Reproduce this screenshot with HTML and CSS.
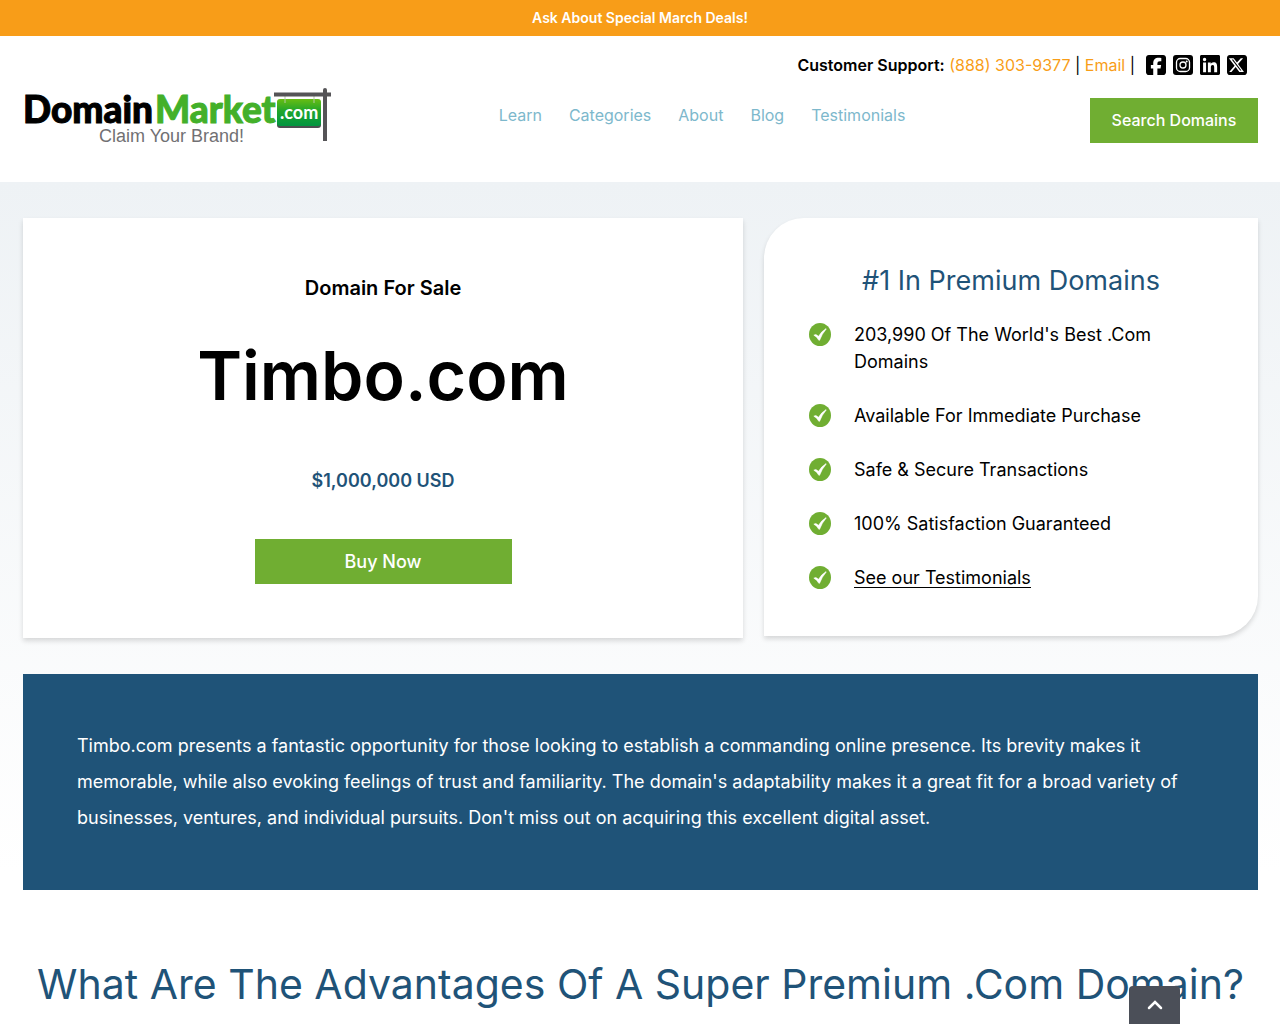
FILE: index.html
```html
<!DOCTYPE html>
<html lang="en">
<head>
<meta charset="utf-8">
<meta name="viewport" content="width=device-width, initial-scale=1">
<title>Timbo.com | DomainMarket.com</title>
<link rel="stylesheet" href="styles.css">
</head>
<body>
<svg class="sprite" aria-hidden="true">
  <symbol id="check" viewBox="0 0 22 23">
    <ellipse cx="11" cy="11.500" rx="11" ry="11.500" fill="#70ae32"/>
    <path d="M4.800 12.200Q6.800 10.200 9.500 13.300Q12.500 8.300 17 5.600L17.300 6Q12.800 11 10.600 17.300H9.800Q7.800 13.500 4.800 12.200Z" fill="#fff" stroke="#fff" stroke-width=".5"/>
  </symbol>
</svg>
<div class="promo">Ask About Special March Deals!</div>
<header class="header">
  <div class="support">
    <span><strong>Customer Support:</strong> <a href="tel:8883039377">(888) 303-9377</a> | <a href="#email">Email</a> |</span>
    <div class="social">
      <a href="#facebook" aria-label="Facebook"><svg viewBox="0 0 448 448"><path d="M64 0C29 0 0 29 0 64v320c0 35 29 64 64 64h98V301h-53v-77h53v-34c0-87 39-127 125-127 16 0 44 3 56 6v71c-6-1-17-1-30-1-42 0-58 16-58 57v28h84l-14 77h-70v147h129c35 0 64-29 64-64V64c0-35-29-64-64-64H64z"/></svg></a>
      <a href="#instagram" aria-label="Instagram"><svg viewBox="0 0 20 20"><rect width="20" height="20" rx="3"/><g fill="none" stroke="#fff" stroke-width="1.300"><rect x="3.500" y="3.500" width="13" height="13" rx="3.800"/><circle cx="10" cy="10" r="3"/></g><circle cx="13.700" cy="6.400" r="1" fill="#fff"/></svg></a>
      <a href="#linkedin" aria-label="LinkedIn"><svg viewBox="0 0 448 448"><path d="M416 0H32C14 0 0 15 0 32v384c0 17 14 32 32 32h384c18 0 32-15 32-32V32c0-17-14-32-32-32zM135 384H69V170h67v214zM102 141a38 38 0 1 1 0-77 38 38 0 0 1 0 77zm282 243h-66V280c0-25-1-57-35-57s-40 27-40 55v106h-66V170h64v29h1c9-17 30-35 62-35 67 0 80 45 80 102v118z"/></svg></a>
      <a href="#x" aria-label="X"><svg viewBox="0 0 448 448"><path d="M64 0C29 0 0 29 0 64v320c0 35 29 64 64 64h320c35 0 64-29 64-64V64c0-35-29-64-64-64H64zm297 72L247 202l133 176H276l-82-107-94 107H49l121-139L42 72h107l74 98 86-98h52zM323 348 137 101h-31l189 247h28z"/></svg></a>
    </div>
  </div>
  <div class="bar">
    <a class="logo" href="#home" aria-label="DomainMarket.com, Claim Your Brand!">
      <svg viewBox="0 0 308 57" width="308" height="57">
        <defs><linearGradient id="sign" x2="0" y2="1"><stop stop-color="#68bd12"/><stop offset=".45" stop-color="#1fa52c"/><stop offset="1" stop-color="#009540"/></linearGradient></defs>
        <text class="logo-name" x="-1" y="36">Domain<tspan class="logo-green" x="131">Market</tspan></text>
        <rect x="253" y="14" width="44" height="27" rx="3" fill="#4b5050"/>
        <rect x="253" y="12" width="44" height="27" rx="3" fill="url(#sign)"/>
        <path d="M261 9v7M290 9v7" stroke="#b5c9a5"/>
        <path d="M250 7.500h57" stroke="#555457" stroke-width="4"/>
        <path d="M301 3v51" stroke="#555457" stroke-width="4"/>
        <circle cx="301" cy="3" r="2" fill="#555457"/>
        <text class="logo-com" x="256" y="32">.com</text>
        <text class="logo-tag" x="75" y="55">Claim Your Brand!</text>
      </svg>
    </a>
    <nav class="nav">
      <a href="#learn">Learn</a><a href="#categories">Categories</a><a href="#about">About</a><a href="#blog">Blog</a><a href="#testimonials">Testimonials</a>
    </nav>
    <button class="button search" type="button">Search Domains</button>
  </div>
</header>
<main class="main">
  <div class="cards">
    <section class="card sale">
      <h2>Domain For Sale</h2>
      <h1>Timbo.com</h1>
      <p class="price">$1,000,000 USD</p>
      <button class="button buy" type="button">Buy Now</button>
    </section>
    <section class="card premium">
      <h2>#1 In Premium Domains</h2>
      <ul>
        <li><svg><use href="#check"/></svg><span>203,990 Of The World's Best .Com Domains</span></li>
        <li><svg><use href="#check"/></svg><span>Available For Immediate Purchase</span></li>
        <li><svg><use href="#check"/></svg><span>Safe &amp; Secure Transactions</span></li>
        <li><svg><use href="#check"/></svg><span>100% Satisfaction Guaranteed</span></li>
        <li><svg><use href="#check"/></svg><a href="#testimonials">See our Testimonials</a></li>
      </ul>
    </section>
  </div>
  <p class="about">Timbo.com presents a fantastic opportunity for those looking to establish a commanding online presence. Its brevity makes it memorable, while also evoking feelings of trust and familiarity. The domain's adaptability makes it a great fit for a broad variety of businesses, ventures, and individual pursuits. Don't miss out on acquiring this excellent digital asset.</p>
  <h2 class="advantages">What Are The Advantages Of A Super Premium .Com Domain?</h2>
</main>
<button class="to-top" type="button" aria-label="Back to top"><svg viewBox="0 0 16 10" width="16" height="10"><path d="M2 8l6-6 6 6" fill="none" stroke="#fff" stroke-width="2.500" stroke-linecap="round"/></svg></button>
</body>
</html>
```
FILE: styles.css
```css
* { box-sizing: border-box; }
body { margin: 0; font: 18px/27px Inter, sans-serif; color: #000; background: #fff; }
h1, h2, p, ul { margin: 0; padding: 0; }
a { color: inherit; text-decoration: none; }
.sprite { display: none; }

.promo { padding: 4px; background: #f89d18; color: #fff; font-size: 14px; line-height: 28px; font-weight: 600; text-align: center; }

.header { padding: 16px 22px 39px 24px; font-size: 16px; }
.support { display: flex; justify-content: flex-end; gap: 11px; padding-right: 11px; line-height: 26px; }
.support strong { font-weight: 600; }
.support span a { color: #f89d18; }
.social { display: flex; align-items: center; gap: 7px; }
.social svg { display: block; width: 20px; height: 20px; }
.bar { display: flex; justify-content: space-between; align-items: flex-start; padding-top: 9px; }
.logo { height: 56px; }
.logo svg { display: block; overflow: visible; }
.logo-name { font: 900 37px Lato, sans-serif; stroke: #000; stroke-width: 1px; }
.logo-green { fill: #43b02a; stroke: #43b02a; }
.logo-com { font: 700 18px Lato, sans-serif; fill: #fff; }
.logo-tag { font: 18px "Liberation Sans", sans-serif; fill: #717073; }
.nav { display: flex; gap: 27px; padding: 15px 18px 0 0; color: #7db8cc; }
.button { height: 45px; padding: 0; border: 0; background: #70ae32; color: #fff; font: 500 18px/27px Inter, sans-serif; }
.search { width: 168px; margin-top: 11px; font-size: 16px; }

.main { padding: 36px 22px 27px 23px; background: linear-gradient(#eef2f5, #fff 690px); }
.cards { display: grid; grid-template-columns: 720fr 494fr; gap: 21px; align-items: start; }
.card { background: #fff; box-shadow: 0 3px 5px rgba(0, 0, 0, .14); }
.sale { display: flex; flex-direction: column; align-items: center; padding: 57px 24px 54px; text-align: center; }
.sale h2 { font-size: 20px; line-height: 27px; font-weight: 600; }
.sale h1 { padding-top: 31px; font-size: 68px; line-height: 84px; font-weight: 600; }
.price { padding: 50px 0 45px; color: #1f5378; font-weight: 600; }
.buy { width: 257px; }
.premium { padding: 45px; border-radius: 40px 0; }
.premium h2 { font-size: 27px; line-height: 36px; font-weight: 400; color: #1f5378; text-align: center; }
.premium ul { display: grid; gap: 27px; padding-top: 22px; list-style: none; }
.premium li { display: flex; align-items: flex-start; gap: 23px; min-height: 27px; }
.premium li svg { flex: none; width: 22px; height: 23px; margin-top: 2px; }
.premium li a { line-height: 19px; margin-top: 4px; border-bottom: 1px solid #000; }
.about { margin-top: 36px; padding: 54px; background: #1f5378; color: #fff; line-height: 36px; }
.advantages { padding-top: 67px; color: #1f5378; font-size: 41px; line-height: 54px; font-weight: 400; text-align: center; }

.to-top { position: fixed; right: 100px; bottom: 0; width: 51px; height: 38px; padding: 0; border: 0; border-radius: 4px 4px 0 0; background: #4b4f58; }
```
